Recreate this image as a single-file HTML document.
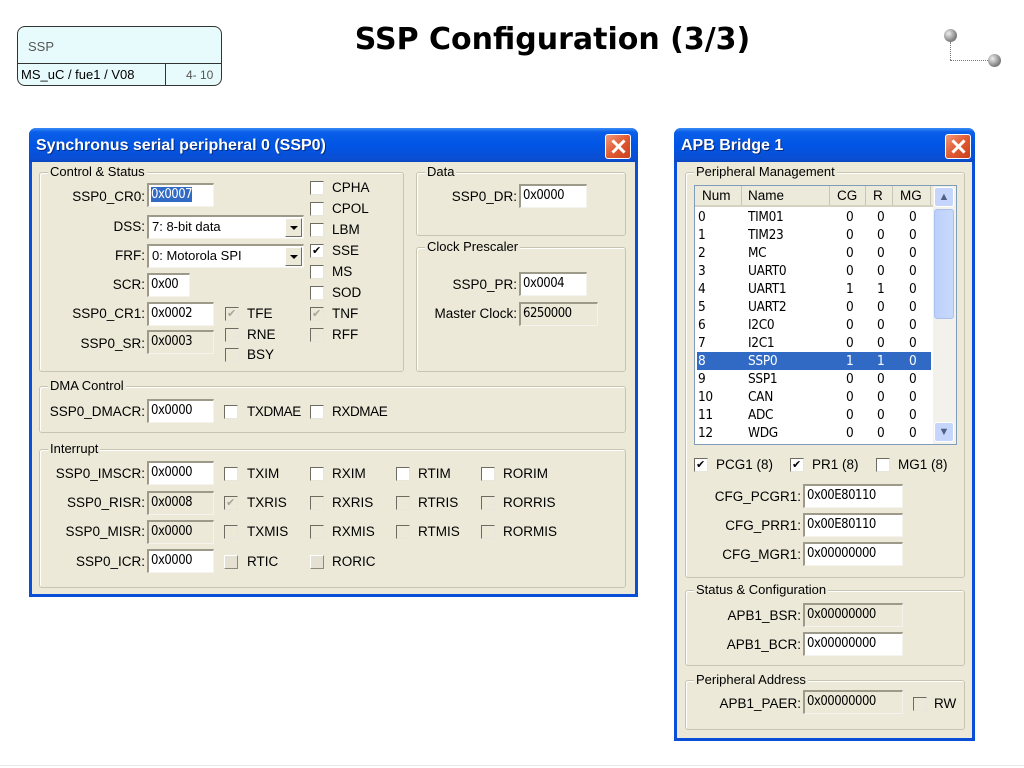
<!DOCTYPE html>
<html><head><meta charset="utf-8">
<style>
*{box-sizing:border-box;margin:0;padding:0}
body{width:1024px;height:768px;background:#fff;position:relative;overflow:hidden;font-family:"Liberation Sans",sans-serif;}
.a{position:absolute}
.win{position:absolute;background:#ece9d8;border:3px solid #0a4fd8;border-top:none;border-radius:7px 7px 0 0;}
.tb{position:absolute;left:-3px;right:-3px;top:0;height:34px;border-radius:7px 7px 0 0;background:linear-gradient(#3a8cf5 0%,#0a5ee8 12%,#0055e5 50%,#0a4fd3 90%,#0a46c0 100%);color:#fff;font-weight:bold;font-size:16px;line-height:36px;padding-left:7px;font-family:"Liberation Sans",sans-serif;text-shadow:1px 1px #0a2a80}
.x{position:absolute;top:6px;width:26px;height:25px;border:1px solid #fff;border-radius:3px;background:linear-gradient(135deg,#f19a7c,#e05a32 50%,#c8401c);}
.x:before,.x:after{content:"";position:absolute;left:11px;top:3px;width:3px;height:17px;background:#fff;transform:rotate(45deg)}
.x:after{transform:rotate(-45deg)}
.g{position:absolute;border:1px solid #c8c4b0;border-radius:3px;box-shadow:inset 1px 1px #fff}
.gl{position:absolute;top:-9px;left:8px;background:#ece9d8;padding:0 2px;font-size:13px;line-height:15px;color:#000;white-space:nowrap}
.l{position:absolute;font-size:13.5px;line-height:16px;color:#000;white-space:nowrap}
.r{text-align:right}
.i{position:absolute;height:24px;background:#fff;border-top:2px solid #9d9a8a;border-left:2px solid #9d9a8a;border-right:1px solid #f4f3ee;border-bottom:1px solid #f4f3ee;font-size:13px;line-height:19px;padding-left:2px;white-space:nowrap;font-family:"DejaVu Sans Condensed","Liberation Sans",sans-serif;letter-spacing:-0.5px}
.gr{background:#ece9d8}
.c{position:absolute;width:14px;height:14px;background:#fff;border:1px solid #6e6c60;border-right-color:#e8e6da;border-bottom-color:#e8e6da;font-size:12px;line-height:12px;text-align:center}
.cg{background:#ece9d8;color:#a8a698}
.cf{background:#e4e1d2;border:1px solid #fff;border-right-color:#8c8a7c;border-bottom-color:#8c8a7c}
.ck:after{content:"✔";position:absolute;left:1px;top:0;font-size:11px}
.sel{position:absolute;width:157px;height:24px;background:#fff;border-top:2px solid #9d9a8a;border-left:2px solid #9d9a8a;border-right:1px solid #f4f3ee;border-bottom:1px solid #f4f3ee;font-size:13px;line-height:19px;padding-left:3px}
.dd{position:absolute;right:1px;top:1px;width:17px;height:19px;background:#ece9d8;border:1px solid #fff;border-right-color:#716f64;border-bottom-color:#716f64}
.dd:after{content:"";position:absolute;left:4px;top:7px;border:4px solid transparent;border-top:4px solid #000;border-bottom:none}
.row{position:absolute;left:0;width:238px;height:18px;font-size:13.5px;line-height:18px;font-family:"DejaVu Sans Condensed","Liberation Sans",sans-serif;letter-spacing:-0.3px}
.row span{position:absolute}
</style></head><body>

<div class="a" style="left:17px;top:26px;width:205px;height:60px;border:1px solid #333;border-radius:8px;background:#e8fbfc;overflow:hidden">
 <div class="a" style="left:10px;top:12px;font-size:13px;color:#555">SSP</div>
 <div class="a" style="left:0;top:36px;width:205px;border-top:1px solid #333"></div>
 <div class="a" style="left:147px;top:36px;height:24px;border-left:1px solid #333"></div>
 <div class="a" style="left:3px;top:40px;font-size:13px;color:#000">MS_uC / fue1 / V08</div>
 <div class="a" style="left:168px;top:41px;font-size:12px;color:#555">4- 10</div>
</div>
<div class="a" style="left:300px;top:22px;width:505px;text-align:center;font-size:30px;font-weight:bold;color:#000;font-family:'DejaVu Sans',sans-serif">SSP Configuration (3/3)</div>
<div class="a" style="left:944px;top:29px;width:13px;height:13px;border-radius:50%;background:radial-gradient(circle at 35% 35%,#eee,#888 60%,#555)"></div>
<div class="a" style="left:950px;top:42px;height:18px;border-left:1px dotted #777"></div>
<div class="a" style="left:950px;top:60px;width:38px;border-top:1px dotted #777"></div>
<div class="a" style="left:988px;top:54px;width:13px;height:13px;border-radius:50%;background:radial-gradient(circle at 35% 35%,#eee,#888 60%,#555)"></div>
<div class="a" style="left:0;top:765px;width:1024px;border-top:1px solid #e8e8e8"></div>

<div class="win" style="left:29px;top:128px;width:609px;height:469px">
 <div class="tb">Synchronus serial peripheral 0 (SSP0)</div>
 <div class="x" style="left:573px"></div>
</div>
<div class="g" style="left:39px;top:172px;width:365px;height:200px"><div class="gl">Control &amp; Status</div></div>
<div class="g" style="left:416px;top:172px;width:210px;height:64px"><div class="gl">Data</div></div>
<div class="g" style="left:416px;top:247px;width:210px;height:125px"><div class="gl">Clock Prescaler</div></div>
<div class="g" style="left:39px;top:386px;width:587px;height:47px"><div class="gl">DMA Control</div></div>
<div class="g" style="left:39px;top:449px;width:587px;height:139px"><div class="gl">Interrupt</div></div>

<div class="l r" style="left:40px;width:105px;top:189px">SSP0_CR0:</div>
<div class="i" style="left:147px;top:183px;width:67px"><span style="background:#316ac5;color:#fff">0x0007</span></div>
<div class="l r" style="left:40px;width:105px;top:219px">DSS:</div>
<div class="sel" style="left:147px;top:215px">7: 8-bit data<div class="dd"></div></div>
<div class="l r" style="left:40px;width:105px;top:248px">FRF:</div>
<div class="sel" style="left:147px;top:244px">0: Motorola SPI<div class="dd"></div></div>
<div class="l r" style="left:40px;width:105px;top:277px">SCR:</div>
<div class="i" style="left:147px;top:273px;width:43px">0x00</div>
<div class="l r" style="left:40px;width:105px;top:306px">SSP0_CR1:</div>
<div class="i" style="left:147px;top:302px;width:67px">0x0002</div>
<div class="l r" style="left:40px;width:105px;top:336px">SSP0_SR:</div>
<div class="i gr" style="left:147px;top:330px;width:67px">0x0003</div>

<div class="c" style="left:310px;top:181px"></div><div class="l" style="left:332px;top:180px">CPHA</div>
<div class="c" style="left:310px;top:202px"></div><div class="l" style="left:332px;top:201px">CPOL</div>
<div class="c" style="left:310px;top:223px"></div><div class="l" style="left:332px;top:222px">LBM</div>
<div class="c ck" style="left:310px;top:244px"></div><div class="l" style="left:332px;top:243px">SSE</div>
<div class="c" style="left:310px;top:265px"></div><div class="l" style="left:332px;top:264px">MS</div>
<div class="c" style="left:310px;top:286px"></div><div class="l" style="left:332px;top:285px">SOD</div>
<div class="c cg ck" style="left:310px;top:307px"></div><div class="l" style="left:332px;top:306px">TNF</div>
<div class="c cg" style="left:310px;top:328px"></div><div class="l" style="left:332px;top:327px">RFF</div>
<div class="c cg ck" style="left:225px;top:307px"></div><div class="l" style="left:247px;top:306px">TFE</div>
<div class="c cg" style="left:225px;top:328px"></div><div class="l" style="left:247px;top:327px">RNE</div>
<div class="c cg" style="left:225px;top:348px"></div><div class="l" style="left:247px;top:347px">BSY</div>

<div class="l r" style="left:420px;width:97px;top:189px">SSP0_DR:</div>
<div class="i" style="left:519px;top:184px;width:68px">0x0000</div>
<div class="l r" style="left:420px;width:97px;top:277px">SSP0_PR:</div>
<div class="i" style="left:519px;top:272px;width:68px">0x0004</div>
<div class="l r" style="left:420px;width:97px;top:306px">Master Clock:</div>
<div class="i gr" style="left:519px;top:302px;width:79px">6250000</div>

<div class="l r" style="left:40px;width:105px;top:404px">SSP0_DMACR:</div>
<div class="i" style="left:147px;top:399px;width:67px">0x0000</div>
<div class="c" style="left:224px;top:405px"></div><div class="l" style="left:247px;top:404px;letter-spacing:-0.4px">TXDMAE</div>
<div class="c" style="left:310px;top:405px"></div><div class="l" style="left:332px;top:404px;letter-spacing:-0.4px">RXDMAE</div>

<div class="l r" style="left:40px;width:105px;top:466px">SSP0_IMSCR:</div>
<div class="i" style="left:147px;top:461px;width:67px">0x0000</div>
<div class="c" style="left:224px;top:467px"></div><div class="l" style="left:247px;top:466px">TXIM</div>
<div class="c" style="left:310px;top:467px"></div><div class="l" style="left:332px;top:466px">RXIM</div>
<div class="c" style="left:396px;top:467px"></div><div class="l" style="left:418px;top:466px">RTIM</div>
<div class="c" style="left:481px;top:467px"></div><div class="l" style="left:503px;top:466px">RORIM</div>

<div class="l r" style="left:40px;width:105px;top:495px">SSP0_RISR:</div>
<div class="i gr" style="left:147px;top:491px;width:67px">0x0008</div>
<div class="c cg ck" style="left:224px;top:496px"></div><div class="l" style="left:247px;top:495px">TXRIS</div>
<div class="c cg" style="left:310px;top:496px"></div><div class="l" style="left:332px;top:495px">RXRIS</div>
<div class="c cg" style="left:396px;top:496px"></div><div class="l" style="left:418px;top:495px">RTRIS</div>
<div class="c cg" style="left:481px;top:496px"></div><div class="l" style="left:503px;top:495px">RORRIS</div>

<div class="l r" style="left:40px;width:105px;top:524px">SSP0_MISR:</div>
<div class="i gr" style="left:147px;top:520px;width:67px">0x0000</div>
<div class="c cg" style="left:224px;top:525px"></div><div class="l" style="left:247px;top:524px">TXMIS</div>
<div class="c cg" style="left:310px;top:525px"></div><div class="l" style="left:332px;top:524px">RXMIS</div>
<div class="c cg" style="left:396px;top:525px"></div><div class="l" style="left:418px;top:524px">RTMIS</div>
<div class="c cg" style="left:481px;top:525px"></div><div class="l" style="left:503px;top:524px">RORMIS</div>

<div class="l r" style="left:40px;width:105px;top:554px">SSP0_ICR:</div>
<div class="i" style="left:147px;top:549px;width:67px">0x0000</div>
<div class="c cf" style="left:224px;top:555px"></div><div class="l" style="left:247px;top:554px">RTIC</div>
<div class="c cf" style="left:310px;top:555px"></div><div class="l" style="left:332px;top:554px">RORIC</div>

<div class="win" style="left:674px;top:128px;width:301px;height:613px">
 <div class="tb">APB Bridge 1</div>
 <div class="x" style="left:268px"></div>
</div>
<div class="g" style="left:685px;top:172px;width:280px;height:406px"><div class="gl">Peripheral Management</div></div>
<div class="g" style="left:685px;top:590px;width:280px;height:76px"><div class="gl">Status &amp; Configuration</div></div>
<div class="g" style="left:685px;top:680px;width:280px;height:50px"><div class="gl">Peripheral Address</div></div>

<div class="a" style="left:694px;top:185px;width:263px;height:260px;background:#fff;border:1px solid #7f9db9;overflow:hidden">
 <div class="a" style="left:0;top:0;width:238px;height:21px;background:#ebeadb;border-bottom:2px solid #d6d2c2;font-size:13.5px;line-height:20px">
  <span class="a" style="left:7px">Num</span><span class="a" style="left:46px;top:0;height:19px;border-left:1px solid #c8c5b5"></span>
  <span class="a" style="left:53px">Name</span><span class="a" style="left:134px;top:0;height:19px;border-left:1px solid #c8c5b5"></span>
  <span class="a" style="left:142px">CG</span><span class="a" style="left:170px;top:0;height:19px;border-left:1px solid #c8c5b5"></span>
  <span class="a" style="left:178px">R</span><span class="a" style="left:197px;top:0;height:19px;border-left:1px solid #c8c5b5"></span>
  <span class="a" style="left:205px">MG</span><span class="a" style="left:235px;top:0;height:19px;border-left:1px solid #c8c5b5"></span>
 </div>
 <div class="a" style="left:238px;top:0;width:23px;height:258px;background:#f3f1ec">
  <div class="a" style="left:1px;top:1px;width:20px;height:20px;border-radius:3px;background:#c5d5fb;border:1px solid #fff;text-align:center;font-size:11px;line-height:18px;color:#4d6185">&#9650;</div>
  <div class="a" style="left:1px;top:23px;width:20px;height:110px;border-radius:3px;background:linear-gradient(90deg,#bcd0fa,#c9d9fd);border:1px solid #a9bff0"></div>
  <div class="a" style="left:1px;top:236px;width:20px;height:20px;border-radius:3px;background:#c5d5fb;border:1px solid #fff;text-align:center;font-size:11px;line-height:18px;color:#4d6185">&#9660;</div>
 </div>
 <div class="a" style="left:0;top:22px;width:238px">
  <div class="row" style="top:0"><span style="left:3px">0</span><span style="left:53px">TIM01</span><span style="left:151px">0</span><span style="left:182px">0</span><span style="left:214px">0</span></div>
  <div class="row" style="top:18px"><span style="left:3px">1</span><span style="left:53px">TIM23</span><span style="left:151px">0</span><span style="left:182px">0</span><span style="left:214px">0</span></div>
  <div class="row" style="top:36px"><span style="left:3px">2</span><span style="left:53px">MC</span><span style="left:151px">0</span><span style="left:182px">0</span><span style="left:214px">0</span></div>
  <div class="row" style="top:54px"><span style="left:3px">3</span><span style="left:53px">UART0</span><span style="left:151px">0</span><span style="left:182px">0</span><span style="left:214px">0</span></div>
  <div class="row" style="top:72px"><span style="left:3px">4</span><span style="left:53px">UART1</span><span style="left:151px">1</span><span style="left:182px">1</span><span style="left:214px">0</span></div>
  <div class="row" style="top:90px"><span style="left:3px">5</span><span style="left:53px">UART2</span><span style="left:151px">0</span><span style="left:182px">0</span><span style="left:214px">0</span></div>
  <div class="row" style="top:108px"><span style="left:3px">6</span><span style="left:53px">I2C0</span><span style="left:151px">0</span><span style="left:182px">0</span><span style="left:214px">0</span></div>
  <div class="row" style="top:126px"><span style="left:3px">7</span><span style="left:53px">I2C1</span><span style="left:151px">0</span><span style="left:182px">0</span><span style="left:214px">0</span></div>
  <div class="row" style="top:144px;background:#316ac5;color:#fff;left:2px;width:234px"><span style="left:1px">8</span><span style="left:51px">SSP0</span><span style="left:149px">1</span><span style="left:180px">1</span><span style="left:212px">0</span></div>
  <div class="row" style="top:162px"><span style="left:3px">9</span><span style="left:53px">SSP1</span><span style="left:151px">0</span><span style="left:182px">0</span><span style="left:214px">0</span></div>
  <div class="row" style="top:180px"><span style="left:3px">10</span><span style="left:53px">CAN</span><span style="left:151px">0</span><span style="left:182px">0</span><span style="left:214px">0</span></div>
  <div class="row" style="top:198px"><span style="left:3px">11</span><span style="left:53px">ADC</span><span style="left:151px">0</span><span style="left:182px">0</span><span style="left:214px">0</span></div>
  <div class="row" style="top:216px"><span style="left:3px">12</span><span style="left:53px">WDG</span><span style="left:151px">0</span><span style="left:182px">0</span><span style="left:214px">0</span></div>
 </div>
</div>

<div class="c ck" style="left:694px;top:458px"></div><div class="l" style="left:716px;top:457px">PCG1 (8)</div>
<div class="c ck" style="left:790px;top:458px"></div><div class="l" style="left:812px;top:457px">PR1 (8)</div>
<div class="c" style="left:876px;top:458px"></div><div class="l" style="left:898px;top:457px">MG1 (8)</div>

<div class="l r" style="left:690px;width:111px;top:489px">CFG_PCGR1:</div>
<div class="i" style="left:803px;top:484px;width:100px">0x00E80110</div>
<div class="l r" style="left:690px;width:111px;top:518px">CFG_PRR1:</div>
<div class="i" style="left:803px;top:513px;width:100px">0x00E80110</div>
<div class="l r" style="left:690px;width:111px;top:547px">CFG_MGR1:</div>
<div class="i" style="left:803px;top:542px;width:100px">0x00000000</div>

<div class="l r" style="left:690px;width:111px;top:608px">APB1_BSR:</div>
<div class="i gr" style="left:803px;top:603px;width:100px">0x00000000</div>
<div class="l r" style="left:690px;width:111px;top:637px">APB1_BCR:</div>
<div class="i" style="left:803px;top:632px;width:100px">0x00000000</div>

<div class="l r" style="left:690px;width:111px;top:696px">APB1_PAER:</div>
<div class="i gr" style="left:803px;top:690px;width:100px">0x00000000</div>
<div class="c cg" style="left:913px;top:697px"></div><div class="l" style="left:934px;top:696px">RW</div>

</body></html>
